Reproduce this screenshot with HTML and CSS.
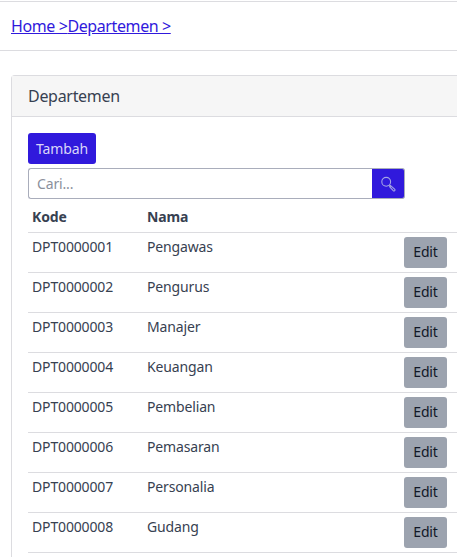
FILE: index.html
```html
<!DOCTYPE html>
<html lang="id">
<head>
<meta charset="utf-8">
<title>Departemen</title>
<link rel="stylesheet" href="styles.css">
</head>
<body>
<nav class="crumbs"><a href="#">Home &gt;</a><a href="#">Departemen &gt;</a></nav>
<section class="card">
  <header class="card-head">Departemen</header>
  <div class="card-body">
    <button class="add" type="button">Tambah</button>
    <form class="search">
      <input class="search-input" type="text" placeholder="Cari...">
      <button class="search-btn" type="button" aria-label="Cari">
        <svg viewBox="0 0 16 16" width="16" height="16" fill="none" stroke="#a5a5e4" stroke-width="1.1"><circle cx="6.2" cy="5.8" r="4.4"/><path d="M9.4 9l1.2 1.2"/><path d="M10.6 9.6l4 3.6a1 1 0 0 1-1.4 1.5l-3.6-4z"/></svg>
      </button>
    </form>
    <div class="table">
      <div class="row head"><span class="code">Kode</span><span class="name">Nama</span></div>
      <div class="row"><span class="code">DPT0000001</span><span class="name">Pengawas</span><button class="edit" type="button">Edit</button></div>
      <div class="row"><span class="code">DPT0000002</span><span class="name">Pengurus</span><button class="edit" type="button">Edit</button></div>
      <div class="row"><span class="code">DPT0000003</span><span class="name">Manajer</span><button class="edit" type="button">Edit</button></div>
      <div class="row"><span class="code">DPT0000004</span><span class="name">Keuangan</span><button class="edit" type="button">Edit</button></div>
      <div class="row"><span class="code">DPT0000005</span><span class="name">Pembelian</span><button class="edit" type="button">Edit</button></div>
      <div class="row"><span class="code">DPT0000006</span><span class="name">Pemasaran</span><button class="edit" type="button">Edit</button></div>
      <div class="row"><span class="code">DPT0000007</span><span class="name">Personalia</span><button class="edit" type="button">Edit</button></div>
      <div class="row"><span class="code">DPT0000008</span><span class="name">Gudang</span><button class="edit" type="button">Edit</button></div>
    </div>
  </div>
</section>
</body>
</html>
```
FILE: styles.css
```css
* { box-sizing: border-box; }
html, body { height: 100%; }
body {
  display: flex;
  flex-direction: column;
  margin: 0;
  padding-top: 1px;
  overflow: hidden;
  background: #fff;
  color: #374151;
  font-family: "Noto Sans", "Open Sans", sans-serif;
  font-size: 14px;
  letter-spacing: -0.15px;
}
.crumbs {
  flex: none;
  height: 50px;
  padding: 14px 11px 0;
  border-top: 1px solid #dcdce0;
  border-bottom: 1px solid #dcdce0;
  font-size: 16px;
  letter-spacing: -0.4px;
  line-height: 20px;
}
.crumbs a { color: #3019dc; text-decoration: underline; }
.card {
  flex: 1;
  min-height: 0;
  margin: 24px 0 0 11px;
  border: 1px solid #dcdce0;
  border-width: 1px 0 0 1px;
  border-radius: 4px 0 0 0;
}
.card-head {
  height: 41px;
  padding: 0 16px;
  line-height: 40px;
  font-size: 16px;
  letter-spacing: -0.3px;
  background: #f6f6f6;
  border-bottom: 1px solid #dcdce0;
}
.card-body { padding: 16px 0 0 16px; }
.add {
  display: block;
  width: 68px;
  height: 31px;
  padding: 0;
  border: 0;
  border-radius: 3px;
  background: #3019dc;
  color: #d9d6f8;
  font: inherit;
  letter-spacing: inherit;
}
.search {
  display: flex;
  width: 377px;
  height: 31px;
  margin-top: 4px;
}
.search-input {
  flex: 1;
  min-width: 0;
  padding: 0 8px;
  border: 1px solid #a9adbb;
  border-right: 0;
  border-radius: 3px 0 0 3px;
  font: inherit;
  letter-spacing: inherit;
  outline: 0;
}
.search-input::placeholder { color: #8b909c; opacity: 1; }
.search-btn {
  display: flex;
  align-items: center;
  justify-content: center;
  width: 33px;
  padding: 0;
  border: 1px solid #a9adbb;
  border-left: 0;
  border-radius: 0 3px 3px 0;
  background: #3019dc;
}
.table { margin-top: 2px; }
.row {
  display: flex;
  align-items: flex-start;
  height: 40px;
  padding: 4px 10px 0 4px;
  line-height: 20px;
  border-bottom: 1px solid #dcdce0;
}
.row.head { height: 32px; padding-top: 6px; font-weight: 700; }
.code { width: 115px; flex: none; }
.name { flex: 1; }
.edit {
  width: 43px;
  height: 31px;
  padding: 0 0 2px;
  border: 0;
  border-radius: 3px;
  background: #9ca3af;
  color: #111827;
  font: inherit;
  letter-spacing: inherit;
}
```
